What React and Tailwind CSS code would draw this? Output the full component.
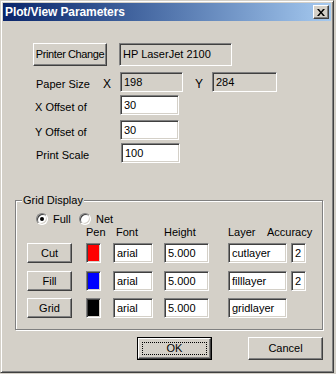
import React from 'react';

const raised =
  'border border-t-white border-l-white border-r-[#404040] border-b-[#404040] shadow-[inset_-1px_-1px_0_#808080]';
const sunken =
  'border border-t-[#808080] border-l-[#808080] border-r-white border-b-white shadow-[inset_1px_1px_0_#404040,inset_-1px_-1px_0_#d4d0c8]';

function Button({ label, className = '' }) {
  return (
    <button className={`${raised} bg-[#d4d0c8] flex items-center justify-center whitespace-nowrap text-[11px] leading-none text-black ${className}`}>
      {label}
    </button>
  );
}

function Field({ value, disabled, className = '' }) {
  return (
    <div className={`${sunken} ${disabled ? 'bg-[#d4d0c8]' : 'bg-white'} flex items-center whitespace-nowrap pl-[3px] text-[11px] leading-none text-black ${className}`}>
      {value}
    </div>
  );
}

function Swatch({ color }) {
  return <div className={`${sunken} w-[15px] h-[20px] ${color}`} />;
}

function Radio({ checked }) {
  return (
    <span className="w-[12px] h-[12px] rounded-full bg-white border border-t-[#808080] border-l-[#808080] border-r-white border-b-white shadow-[inset_1px_1px_0_#404040,inset_-1px_-1px_0_#d4d0c8] flex items-center justify-center">
      {checked && <span className="w-[4px] h-[4px] rounded-full bg-black" />}
    </span>
  );
}

function FormRow({ label, value, className = '' }) {
  return (
    <div className={`flex items-center h-[20px] pl-[32px] ${className}`}>
      <span className="w-[85px] pt-[4px]">{label}</span>
      <Field value={value} className="w-[59px] h-[20px]" />
    </div>
  );
}

const rows = [
  { name: 'Cut', color: 'bg-[#ff0000]', layer: 'cutlayer', acc: '2', gap: '' },
  { name: 'Fill', color: 'bg-[#0000ff]', layer: 'filllayer', acc: '2', gap: 'mt-[8px]' },
  { name: 'Grid', color: 'bg-black', layer: 'gridlayer', acc: null, gap: 'mt-[7px]' },
];

export default function App() {
  return (
    <div className="w-[336px] h-[374px] bg-[#d4d0c8] font-['Liberation_Sans',Arial,sans-serif] text-[11px] text-black">
      <div className="w-[334px] h-[373px] bg-[#d4d0c8] border border-t-[#d4d0c8] border-l-[#d4d0c8] border-r-[#404040] border-b-[#404040] shadow-[inset_1px_1px_0_#fff,inset_-1px_-1px_0_#808080] p-[2px] flex flex-col">
        {/* Title bar */}
        <div className="h-[18px] flex items-center justify-between bg-linear-to-r from-[#0a246a] to-[#a6caf0] pl-[2px] pr-[2px]">
          <span className="text-white font-bold text-[12px] leading-none tracking-[-0.1px]">Plot/View Parameters</span>
          <button className={`${raised} bg-[#d4d0c8] w-[16px] h-[14px] flex items-center justify-center`}>
            <svg width="8" height="7" viewBox="0 0 8 7">
              <path d="M0 0h2l2 2.5L6 0h2L5 3.5 8 7H6L4 4.5 2 7H0l3-3.5z" fill="#000" />
            </svg>
          </button>
        </div>

        {/* Printer */}
        <div className="flex items-start mt-[22px] pl-[30px]">
          <Button label="Printer Change" className="w-[74px] h-[23px] tracking-[-0.4px]" />
          <Field value="HP LaserJet 2100" disabled className="ml-[12px] w-[113px] h-[23px]" />
        </div>

        {/* Paper size */}
        <div className="flex items-center mt-[6px] pl-[33px] h-[20px]">
          <span className="w-[67px] pt-[4px]">Paper Size</span>
          <span className="w-[17px] pt-[4px] text-[12px]">X</span>
          <Field value="198" disabled className="w-[63px] h-[20px]" />
          <span className="ml-[12px] w-[17px] pt-[4px] text-[12px]">Y</span>
          <Field value="284" disabled className="w-[65px] h-[20px]" />
        </div>

        <FormRow label="X Offset of" value="30" className="mt-[3px]" />
        <FormRow label="Y Offset of" value="30" className="mt-[5px]" />
        <FormRow label="Print Scale" value="100" className="mt-[3px] pl-[33px]" />

        {/* Grid display */}
        <fieldset className="ml-[12px] mt-[31px] w-[308px] border border-[#808080] shadow-[inset_1px_1px_0_#fff,1px_1px_0_#fff] pb-[11px]">
          <legend className="ml-[6px] px-[1px] bg-[#d4d0c8] leading-[13px]">Grid Display</legend>
          <div className="flex items-center h-[12px] mt-[6px] pl-[20px]">
            <Radio checked />
            <span className="ml-[5px] w-[26px]">Full</span>
            <Radio />
            <span className="ml-[5px]">Net</span>
          </div>
          <div className="flex h-[13px] leading-[13px] pl-[70px] mt-[1px]">
            <span className="w-[30px]">Pen</span>
            <span className="w-[48px]">Font</span>
            <span className="w-[64px]">Height</span>
            <span className="w-[39px]">Layer</span>
            <span>Accuracy</span>
          </div>
          {rows.map((r, i) => (
            <div key={r.name} className={`flex items-center h-[20px] pl-[11px] ${i === 0 ? 'mt-[4px]' : r.gap}`}>
              <Button label={r.name} className="w-[45px] h-[20px]" />
              <div className="ml-[14px]">
                <Swatch color={r.color} />
              </div>
              <Field value="arial" className="ml-[12px] w-[40px] h-[20px]" />
              <Field value="5.000" className="ml-[11px] w-[45px] h-[20px]" />
              <Field value={r.layer} className="ml-[19px] w-[59px] h-[20px]" />
              {r.acc && <Field value={r.acc} className="ml-[4px] w-[15px] h-[20px]" />}
            </div>
          ))}
        </fieldset>

        {/* Buttons */}
        <div className="flex mt-[7px] pl-[134px]">
          <div className="relative w-[75px] h-[23px] border border-black">
            <Button label="OK" className="w-full h-full" />
            <span className="absolute inset-[4px] border border-dotted border-black pointer-events-none" />
          </div>
          <Button label="Cancel" className="ml-[36px] w-[75px] h-[23px]" />
        </div>
      </div>
    </div>
  );
}
